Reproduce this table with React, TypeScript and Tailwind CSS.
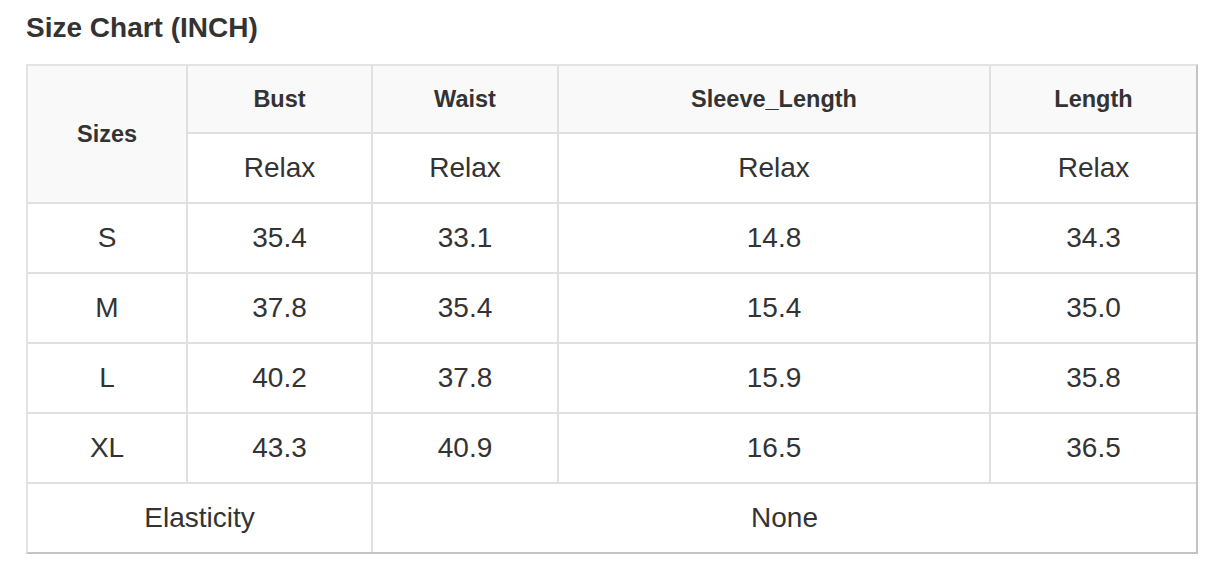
import React from "react";

const rows = [
  ["S", "35.4", "33.1", "14.8", "34.3"],
  ["M", "37.8", "35.4", "15.4", "35.0"],
  ["L", "40.2", "37.8", "15.9", "35.8"],
  ["XL", "43.3", "40.9", "16.5", "36.5"],
];

const font = { fontFamily: '"Liberation Sans", Arial, Helvetica, sans-serif' };

export default function App() {
  return (
    <div className="bg-white w-[1218px] h-[584px] pl-[26px] pt-[12px] text-[#333]" style={font}>
      <div className="text-[28px] leading-[32px] font-bold">Size Chart (INCH)</div>
      <div className="mt-[20px] w-[1172px] border-2 border-t-[#e3e3e3] border-l-[#e3e3e3] border-r-[#c4c4c4] border-b-[#c4c4c4] bg-[#e0e0e0] grid grid-cols-[158px_183px_184px_430px_205px] grid-rows-[66px_68px_68px_68px_68px_68px_68px] gap-[2px]">
        <div className="row-span-2 bg-[#f9f9f9] flex items-center justify-center pt-[2px] text-[23.5px] font-bold">Sizes</div>
        {["Bust", "Waist", "Sleeve_Length", "Length"].map((h) => (
          <div key={h} className="bg-[#f9f9f9] flex items-center justify-center pt-[2px] text-[23.5px] font-bold">
            {h}
          </div>
        ))}
        {[0, 1, 2, 3].map((i) => (
          <div key={i} className="bg-white flex items-center justify-center text-[28px]">
            Relax
          </div>
        ))}
        {rows.map((r) =>
          r.map((c, j) => (
            <div key={r[0] + j} className="bg-white flex items-center justify-center text-[28px]">
              {c}
            </div>
          ))
        )}
        <div className="col-span-2 bg-white flex items-center justify-center text-[28px]">Elasticity</div>
        <div className="col-span-3 bg-white flex items-center justify-center text-[28px]">None</div>
      </div>
    </div>
  );
}
